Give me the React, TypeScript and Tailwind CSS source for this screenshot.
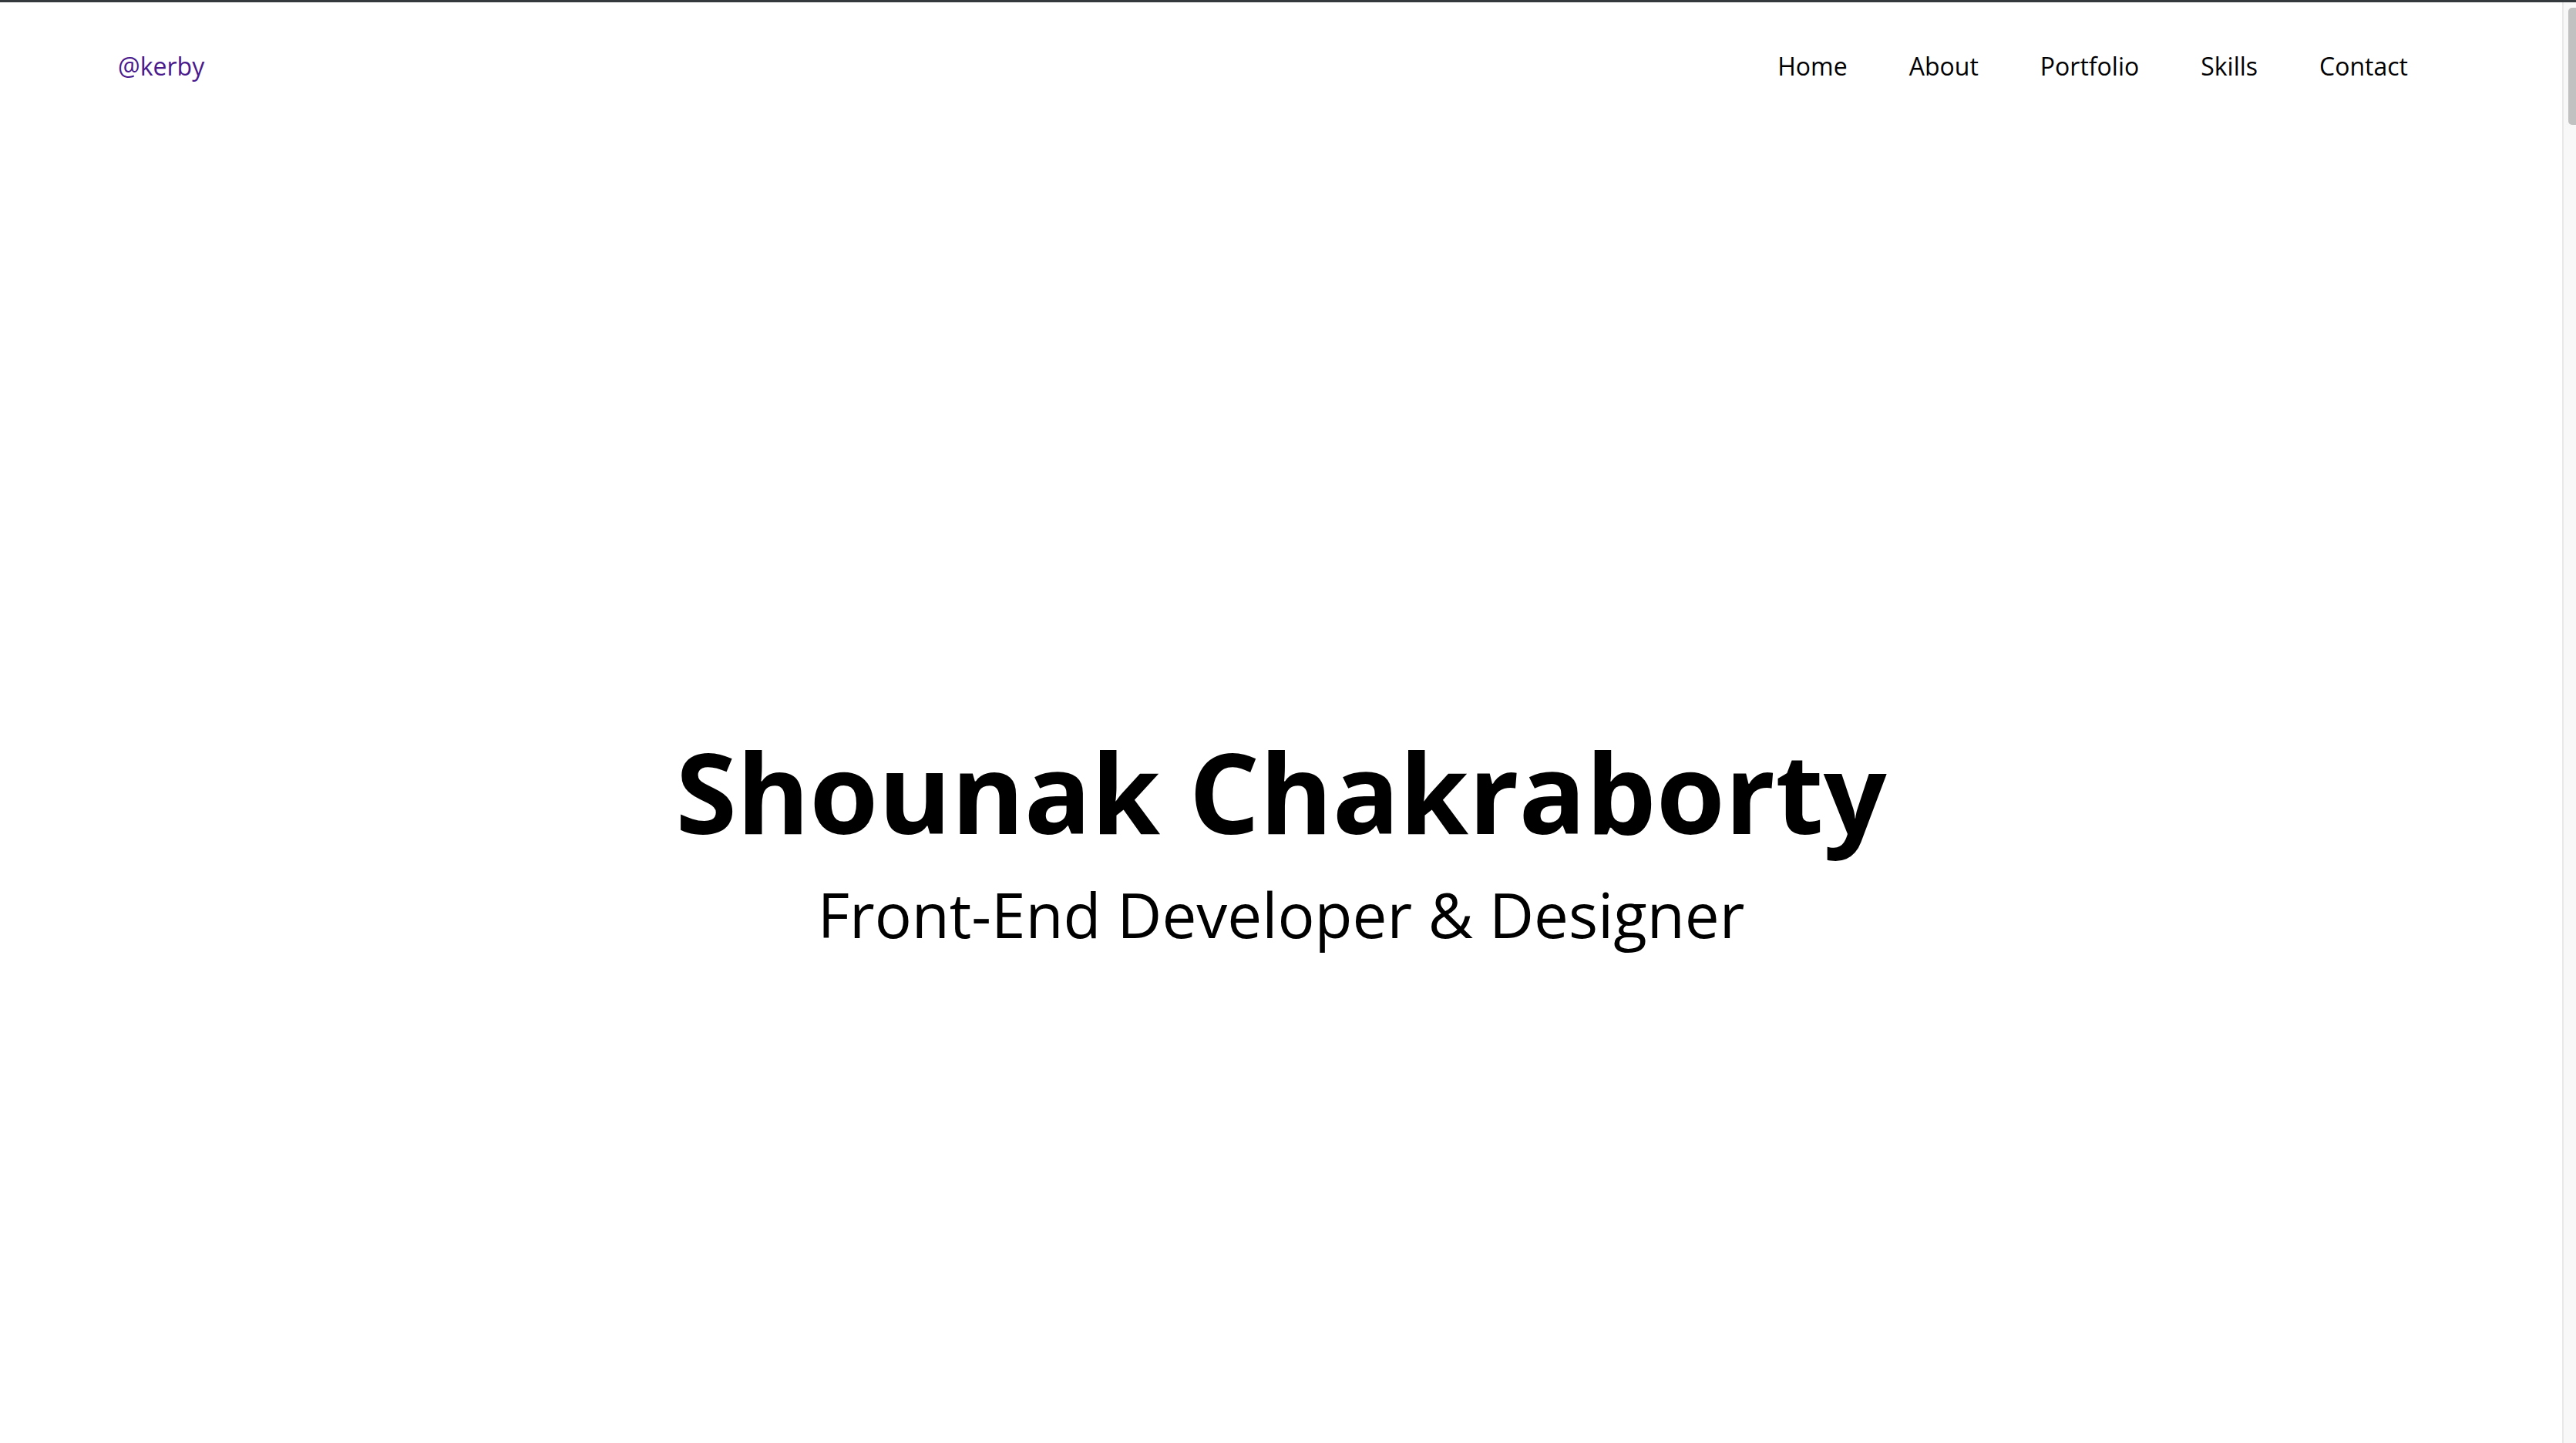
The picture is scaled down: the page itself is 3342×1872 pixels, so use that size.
import React from 'react';

const links = ['Home', 'About', 'Portfolio', 'Skills', 'Contact'];

const Header: React.FC = () => (
    <header className="flex h-[166px] items-center justify-between pl-[153px] pr-[160px]">
        <a href="#" className="text-[32px] leading-[44px] text-[#4a1a8c]">
            @kerby
        </a>
        <nav className="flex items-center">
            {links.map((label) => (
                <a key={label} href="#" className="px-10 text-[32px] leading-[44px] text-black">
                    {label}
                </a>
            ))}
        </nav>
    </header>
);

const Hero: React.FC = () => (
    <section className="flex flex-col items-center pt-[759px] text-center text-black">
        <h1 className="text-[144px] font-bold leading-[196px]">Shounak Chakraborty</h1>
        <p className="mt-[7px] text-[80px] leading-[109px]">Front-End Developer &amp; Designer</p>
    </section>
);

export default function App() {
    return (
        <div
            className="flex h-[1872px] flex-col overflow-hidden bg-white"
            style={{ fontFamily: '"Open Sans", "Noto Sans", sans-serif' }}
        >
            <div className="h-[3px] shrink-0 bg-[#33393c]" />
            <div className="flex min-h-0 flex-1">
                <main className="flex-1">
                    <Header />
                    <Hero />
                </main>
                {/* page scrollbar */}
                <div className="w-[18px] shrink-0 border-l-2 border-[#e8e8e8] bg-[#f8f8f8] pl-[6px] pt-[7px]">
                    <div className="h-[152px] w-[10px] rounded-l-[5px] bg-[#c1c1c1]" />
                </div>
            </div>
        </div>
    );
}
